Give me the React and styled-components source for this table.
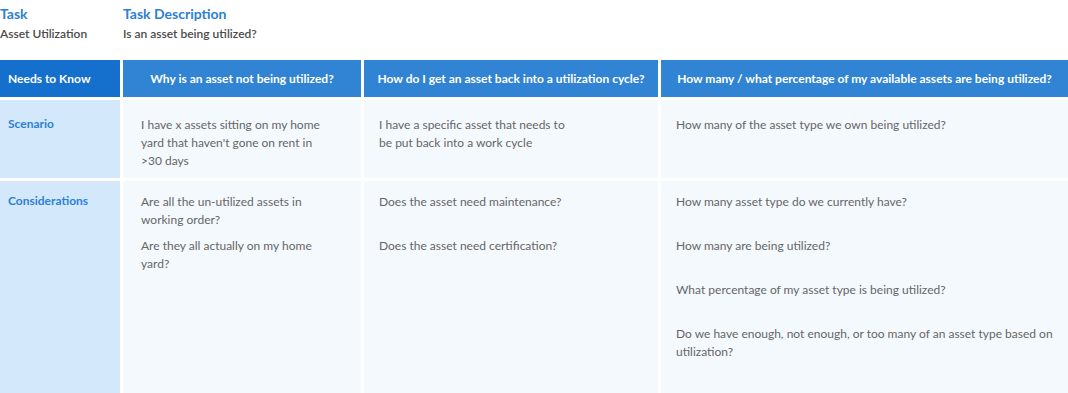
import styled, { createGlobalStyle } from 'styled-components';

const GlobalStyle = createGlobalStyle`
  body {
    margin: 0;
    background: #ffffff;
    font-family: 'Lato', 'Noto Sans', sans-serif;
  }
`

const columns = [
  'Why is an asset not being utilized?',
  'How do I get an asset back into a utilization cycle?',
  'How many / what percentage of my available assets are being utilized?',
];

const rows = [
  {
    label: 'Scenario',
    top: 16,
    cells: [
      ['I have x assets sitting on my home yard that haven\'t gone on rent in >30 days'],
      ['I have a specific asset that needs to be put back into a work cycle'],
      ['How many of the asset type we own being utilized?'],
    ],
    tall: false,
  },
  {
    label: 'Considerations',
    top: 12,
    cells: [
      ['Are all the un-utilized assets in working order?', 'Are they all actually on my home yard?'],
      ['Does the asset need maintenance?', 'Does the asset need certification?'],
      [
        'How many asset type do we currently have?',
        'How many are being utilized?',
        'What percentage of my asset type is being utilized?',
        'Do we have enough, not enough, or too many of an asset type based on utilization?',
      ],
    ],
    tall: true,
  },
];

const Page = styled.div`
  width: 1068px;
  height: 393px;
  overflow: hidden;
`

const Intro = styled.div`
  display: grid;
  grid-template-columns: 123px 1fr;
  padding-top: 5px;
  height: 60px;
  box-sizing: border-box;
`

const IntroTitle = styled.div`
  color: #2b80d5;
  font-size: 14px;
  font-weight: 700;
  line-height: 17px;
`

const IntroText = styled.div`
  color: #4a4a4a;
  font-size: 12px;
  font-weight: 600;
  line-height: 14px;
  margin-top: 5px;
`

const Table = styled.div`
  display: grid;
  grid-template-columns: 120px 238px 294px 1fr;
  grid-template-rows: 37px 78px 1fr;
  gap: 3px;
`

const HeadCell = styled.div`
  background: ${p => p.$first ? '#1570cd' : '#3183d4'};
  color: #ffffff;
  font-size: 12px;
  font-weight: 700;
  display: flex;
  align-items: center;
  justify-content: ${p => p.$first ? 'flex-start' : 'center'};
  padding: 0 8px;
`

const LabelCell = styled.div`
  background: #d4e8fc;
  color: #2b80d5;
  font-size: 12px;
  font-weight: 700;
  line-height: 18px;
  padding: ${p => p.$top - 1}px 8px 0;
  min-height: ${p => p.$tall ? '220px' : 'auto'};
`

const Cell = styled.div`
  background: #f4f9fe;
  color: #666666;
  font-size: 12px;
  line-height: 18px;
  padding: ${p => p.$top}px ${p => p.$right}px 0 ${p => p.$left}px;
`

const Item = styled.p`
  margin: 0 0 8px;
  min-height: ${p => p.$tall ? '36px' : 'auto'};
  max-width: ${p => p.$narrow ? '195px' : 'none'};
`

const sides = [[18, 26], [15, 15], [15, 15]];

export default function App() {
  return (
    <>
      <GlobalStyle />
      <Page>
        <Intro>
          <div>
            <IntroTitle>Task</IntroTitle>
            <IntroText>Asset Utilization</IntroText>
          </div>
          <div>
            <IntroTitle>Task Description</IntroTitle>
            <IntroText>Is an asset being utilized?</IntroText>
          </div>
        </Intro>
        <Table>
          <HeadCell $first>Needs to Know</HeadCell>
          {columns.map(c => <HeadCell key={c}>{c}</HeadCell>)}
          {rows.map(row => [
            <LabelCell key={row.label} $top={row.top} $tall={row.tall}>{row.label}</LabelCell>,
            ...row.cells.map((items, i) => (
              <Cell key={row.label + i} $top={row.top} $left={sides[i][0]} $right={sides[i][1]}>
                {items.map(t => (
                  <Item key={t} $tall={row.tall} $narrow={i === 1}>{t}</Item>
                ))}
              </Cell>
            )),
          ])}
        </Table>
      </Page>
    </>
  )
}
